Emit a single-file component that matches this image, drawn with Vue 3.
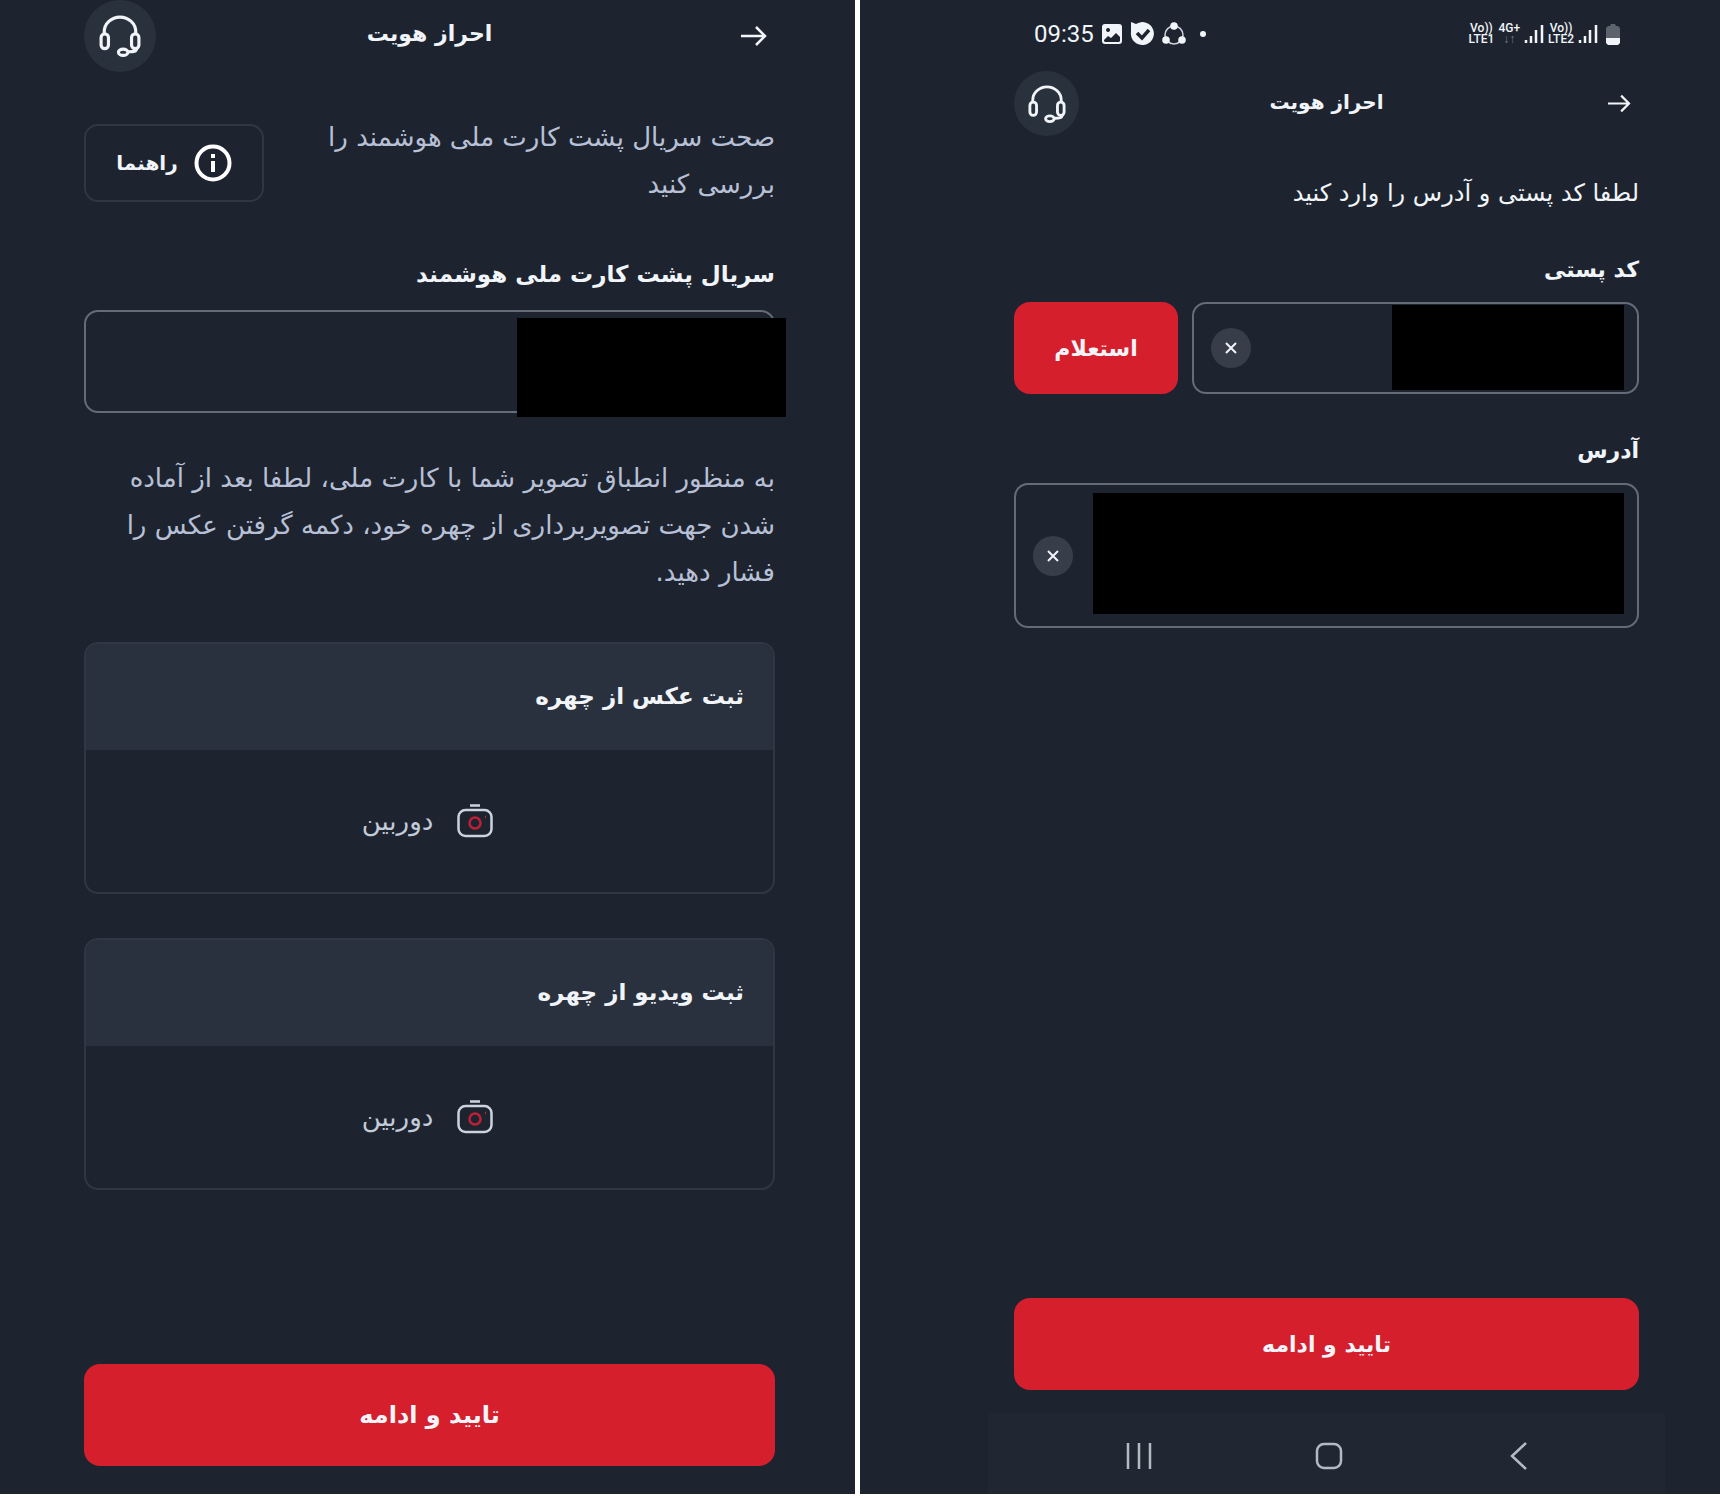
<script setup>
import { ref } from 'vue'

const serial = ref('')
const postalCode = ref('')
const address = ref('')

const captures = [
  { id: 'photo', title: 'ثبت عکس از چهره' },
  { id: 'video', title: 'ثبت ویدیو از چهره' }
]
</script>

<template>
  <main class="board">
    <section class="panel panel-face" dir="rtl">
      <header class="top-bar">
        <button class="icon-button back" type="button" aria-label="بازگشت">
          <svg viewBox="0 0 28 24" width="28" height="24">
            <path d="M2 12h24M17 3l9 9-9 9" />
          </svg>
        </button>
        <h1>احراز هویت</h1>
        <button class="icon-button support" type="button" aria-label="پشتیبانی">
          <svg viewBox="0 0 40 40" width="42" height="42">
            <path d="M5 18v-2a15 14 0 0 1 30 0v2" />
            <rect x="2" y="18" width="7" height="14" rx="3.500" />
            <rect x="31" y="18" width="7" height="14" rx="3.500" />
            <path d="M36 31c0 4-3 4-8 4" />
            <ellipse cx="23" cy="35.500" rx="4.500" ry="3" />
          </svg>
        </button>
      </header>

      <div class="intro">
        <p class="muted">صحت سریال پشت کارت ملی هوشمند را<br />بررسی کنید</p>
        <button class="help" type="button">
          <svg viewBox="0 0 38 38" width="38" height="38">
            <circle cx="19" cy="19" r="16.500" />
            <path d="M19 17v11M19 10v4" />
          </svg>
          <span>راهنما</span>
        </button>
      </div>

      <label class="label" for="serial">سریال پشت کارت ملی هوشمند</label>
      <div class="field">
        <input id="serial" v-model="serial" class="control" type="text" />
        <span class="mask mask-serial"></span>
      </div>

      <p class="muted notice">
        به منظور انطباق تصویر شما با کارت ملی، لطفا بعد از آماده<br />شدن جهت تصویربرداری از چهره خود، دکمه گرفتن عکس را<br />فشار دهید.
      </p>

      <article v-for="item in captures" :key="item.id" class="card">
        <h2>{{ item.title }}</h2>
        <button class="camera" type="button">
          <svg viewBox="0 0 36 34" width="36" height="34">
            <path d="M13 1.500h10" />
            <rect x="1.500" y="6" width="33" height="26" rx="7" />
            <circle class="lens" cx="18" cy="19" r="5.500" />
            <path class="lens" d="M28 13h1" />
          </svg>
          <span>دوربین</span>
        </button>
      </article>

      <button class="primary submit" type="button">تایید و ادامه</button>
    </section>

    <section class="panel panel-address">
      <div class="phone">
        <div class="status">
          <div class="status-side">
            <time>09:35</time>
            <svg viewBox="0 0 20 20" width="20" height="20">
              <path fill="#f1f5f9" fill-rule="evenodd" d="M3 0h14a3 3 0 0 1 3 3v14a3 3 0 0 1-3 3H3a3 3 0 0 1-3-3V3a3 3 0 0 1 3-3zM2 16v1l1 1h14l1-1v-4l-4-4-5 5-3-2zM6 4a2 2 0 1 0 .1 0z" />
            </svg>
            <svg viewBox="0 0 24 24" width="24" height="24">
              <path fill="#f1f5f9" d="M1 0l5 2a11.500 11.500 0 1 1-5 8z" />
              <path d="M7 11l5 5 7-8" fill="none" stroke="#1d2430" stroke-width="3.500" />
            </svg>
            <svg viewBox="0 0 24 24" width="24" height="24">
              <circle cx="12" cy="13" r="9" fill="none" stroke="#cbd3dc" stroke-width="1.500" />
              <g fill="#f1f5f9">
                <circle cx="12" cy="4" r="3.800" />
                <circle cx="4" cy="18" r="3.800" />
                <circle cx="20" cy="18" r="3.800" />
              </g>
            </svg>
            <i class="dot"></i>
          </div>
          <div class="status-side network">
            <span class="lte">Vo))<br />LTE1</span>
            <span class="lte">4G+<br /><small>↓↑</small></span>
            <svg class="signal" viewBox="0 0 20 20" width="20" height="20">
              <path d="M2 19v-3M7 19v-7M12 19V6M18 19V1" />
            </svg>
            <span class="lte">Vo))<br />LTE2</span>
            <svg class="signal" viewBox="0 0 20 20" width="20" height="20">
              <path d="M2 19v-3M7 19v-7M12 19V6M18 19V1" />
            </svg>
            <svg class="battery" viewBox="0 0 14 21" width="14" height="21">
              <path fill="#5d636d" d="M2 2h2l1-2h4l1 2h2l2 2v10H0V4z" />
              <path fill="#f1f5f9" d="M0 14h14v5l-2 2H2l-2-2z" />
            </svg>
          </div>
        </div>

        <div class="content" dir="rtl">
          <header class="top-bar">
            <button class="icon-button back" type="button" aria-label="بازگشت">
              <svg viewBox="0 0 28 24" width="25" height="21">
                <path d="M2 12h24M17 3l9 9-9 9" />
              </svg>
            </button>
            <h1>احراز هویت</h1>
            <button class="icon-button support" type="button" aria-label="پشتیبانی">
              <svg viewBox="0 0 40 40" width="38" height="38">
                <path d="M5 18v-2a15 14 0 0 1 30 0v2" />
                <rect x="2" y="18" width="7" height="14" rx="3.500" />
                <rect x="31" y="18" width="7" height="14" rx="3.500" />
                <path d="M36 31c0 4-3 4-8 4" />
                <ellipse cx="23" cy="35.500" rx="4.500" ry="3" />
              </svg>
            </button>
          </header>

          <p class="lead">لطفا کد پستی و آدرس را وارد کنید</p>

          <label class="label" for="postal">کد پستی</label>
          <div class="postal-row">
            <div class="field">
              <input id="postal" v-model="postalCode" class="control" type="text" />
              <span class="mask mask-postal"></span>
              <button class="clear" type="button" aria-label="پاک کردن" @click="postalCode = ''">
                <svg viewBox="0 0 12 12" width="12" height="12"><path d="M1 1l10 10M11 1L1 11" /></svg>
              </button>
            </div>
            <button class="primary inquiry" type="button">استعلام</button>
          </div>

          <label class="label label-address" for="address">آدرس</label>
          <div class="field">
            <textarea id="address" v-model="address" class="control"></textarea>
            <span class="mask mask-address"></span>
            <button class="clear" type="button" aria-label="پاک کردن" @click="address = ''">
              <svg viewBox="0 0 12 12" width="12" height="12"><path d="M1 1l10 10M11 1L1 11" /></svg>
            </button>
          </div>

          <button class="primary submit" type="button">تایید و ادامه</button>
        </div>

        <nav class="nav">
          <button type="button" aria-label="برنامه‌ها">
            <svg viewBox="0 0 28 28" width="28" height="28"><path d="M3 1v26M14 1v26M25 1v26" /></svg>
          </button>
          <button type="button" aria-label="خانه">
            <svg viewBox="0 0 28 28" width="28" height="28"><rect x="2" y="2" width="24" height="24" rx="7" /></svg>
          </button>
          <button type="button" aria-label="قبلی">
            <svg viewBox="0 0 28 28" width="28" height="28"><path d="M21 1L7 14l14 13" /></svg>
          </button>
        </nav>
      </div>
    </section>
  </main>
</template>

<style>
body {
  margin: 0;
  background: #fff;
}
</style>

<style scoped>
.board {
  display: grid;
  grid-template-columns: 855fr 860fr;
  gap: 5px;
  min-height: 100vh;
  padding-bottom: 6px;
  box-sizing: border-box;
  font-family: "DejaVu Sans", sans-serif;
  color: #f1f5f9;
}

.board * {
  box-sizing: border-box;
}

.panel {
  display: flex;
  flex-direction: column;
  background: #1d2430;
}

.panel-face {
  padding: 0 80px 28px 84px;
}

.panel-address {
  padding: 0 55px 0 128px;
}

h1,
h2,
p {
  margin: 0;
}

button {
  padding: 0;
  border: 0;
  background: none;
  color: inherit;
  font-family: inherit;
  cursor: pointer;
}

svg {
  display: block;
  flex: none;
}

/* header */
.top-bar {
  display: grid;
  grid-template-columns: 1fr auto 1fr;
  align-items: center;
}

.top-bar h1 {
  padding-bottom: 4px;
  font-size: 22px;
  line-height: 40px;
  font-weight: 700;
}

.icon-button svg {
  fill: none;
  stroke: #f1f5f9;
  stroke-width: 2.500;
}

.back {
  justify-self: start;
  padding: 8px;
}

.support {
  display: grid;
  place-items: center;
  justify-self: end;
  width: 72px;
  height: 72px;
  border-radius: 50%;
  background: #29313d;
}

.icon-button.support svg {
  stroke-width: 3;
}

/* identity form */
.intro {
  display: flex;
  align-items: center;
  justify-content: space-between;
  margin-top: 42px;
}

.muted {
  color: #b8c0d6;
  font-size: 26px;
  line-height: 47px;
  white-space: nowrap;
}

.help {
  display: flex;
  align-items: center;
  justify-content: center;
  gap: 16px;
  width: 180px;
  height: 78px;
  margin-top: 4px;
  border: 2px solid #2f3644;
  border-radius: 14px;
  font-size: 20px;
  font-weight: 700;
}

.help svg {
  fill: none;
  stroke: #fff;
  stroke-width: 4;
}

.label {
  margin: 46px 0 16px;
  font-size: 23px;
  line-height: 40px;
  font-weight: 700;
}

.field {
  position: relative;
}

.control {
  display: block;
  width: 100%;
  height: 103px;
  padding: 0 16px;
  border: 2px solid #646c79;
  border-radius: 14px;
  outline: none;
  resize: none;
  background: transparent;
  color: #f1f5f9;
  font-family: inherit;
  font-size: 22px;
}

.mask {
  position: absolute;
  background: #000;
}

.mask-serial {
  top: 8px;
  right: -11px;
  width: 39%;
  height: 99px;
}

.notice {
  margin: 42px 0 0;
}

.card {
  margin-top: 44px;
  border: 2px solid #2f3744;
  border-radius: 14px;
  overflow: hidden;
}

.notice + .card {
  margin-top: 46px;
}

.card h2 {
  padding: 0 29px 2px;
  background: #2a313e;
  font-size: 23px;
  line-height: 104px;
  font-weight: 700;
}

.camera {
  display: flex;
  align-items: center;
  justify-content: center;
  gap: 24px;
  width: 100%;
  height: 142px;
  padding-right: 4px;
  color: #c3cad8;
  font-size: 26px;
}

.camera svg {
  fill: none;
  stroke: #cbd3e0;
  stroke-width: 2.500;
}

.camera .lens {
  stroke: #c01f36;
}

.primary {
  height: 102px;
  border-radius: 16px;
  background: #d61f2c;
  font-size: 24px;
  font-weight: 700;
}

.submit {
  width: 100%;
  margin-top: auto;
}

/* address form */
.phone {
  display: flex;
  flex: 1;
  flex-direction: column;
}

.status {
  display: flex;
  align-items: center;
  justify-content: space-between;
  height: 68px;
  padding: 0 45px 0 46px;
  font-family: Roboto, sans-serif;
}

.status-side {
  display: flex;
  align-items: center;
  gap: 8px;
}

.status-side time {
  font-size: 24px;
}

.dot {
  width: 6px;
  height: 6px;
  margin-left: 6px;
  border-radius: 50%;
  background: #f1f5f9;
}

.network {
  gap: 4px;
}

.lte {
  font-size: 12px;
  line-height: 11px;
  font-weight: 500;
  text-align: center;
}

.lte small {
  color: #79808a;
  font-size: 12px;
}

.signal {
  stroke: #f1f5f9;
  stroke-width: 2.500;
}

.battery {
  margin-left: 4px;
}

.content {
  display: flex;
  flex: 1;
  flex-direction: column;
  padding: 3px 26px 23px;
}

.content .support {
  width: 65px;
  height: 65px;
}

.content h1 {
  font-size: 20px;
}

.lead {
  margin-top: 37px;
  font-size: 24px;
  line-height: 40px;
}

.content .label {
  margin: 37px 0 12px;
  font-size: 22px;
}

.postal-row {
  display: flex;
  gap: 14px;
}

.postal-row .field {
  flex: 1;
}

.content input,
.content .primary {
  height: 92px;
}

.content .primary {
  font-size: 22px;
}

.content textarea {
  height: 145px;
}

.content .inquiry {
  width: 164px;
}

.mask-postal {
  top: 3px;
  right: 15px;
  width: 52%;
  height: 85px;
}

.mask-address {
  top: 10px;
  right: 15px;
  width: 85%;
  height: 121px;
}

.clear {
  position: absolute;
  top: 50%;
  left: 19px;
  display: grid;
  place-items: center;
  width: 40px;
  height: 40px;
  margin-top: -20px;
  border-radius: 50%;
  background: #373e49;
}

.clear svg {
  stroke: #f1f5f9;
  stroke-width: 2;
}

.nav {
  display: flex;
  align-items: center;
  justify-content: space-around;
  height: 81px;
  padding: 4px 51px 0 56px;
  background: #202732;
}

.nav svg {
  fill: none;
  stroke: #b4bac4;
  stroke-width: 2.500;
}
</style>
